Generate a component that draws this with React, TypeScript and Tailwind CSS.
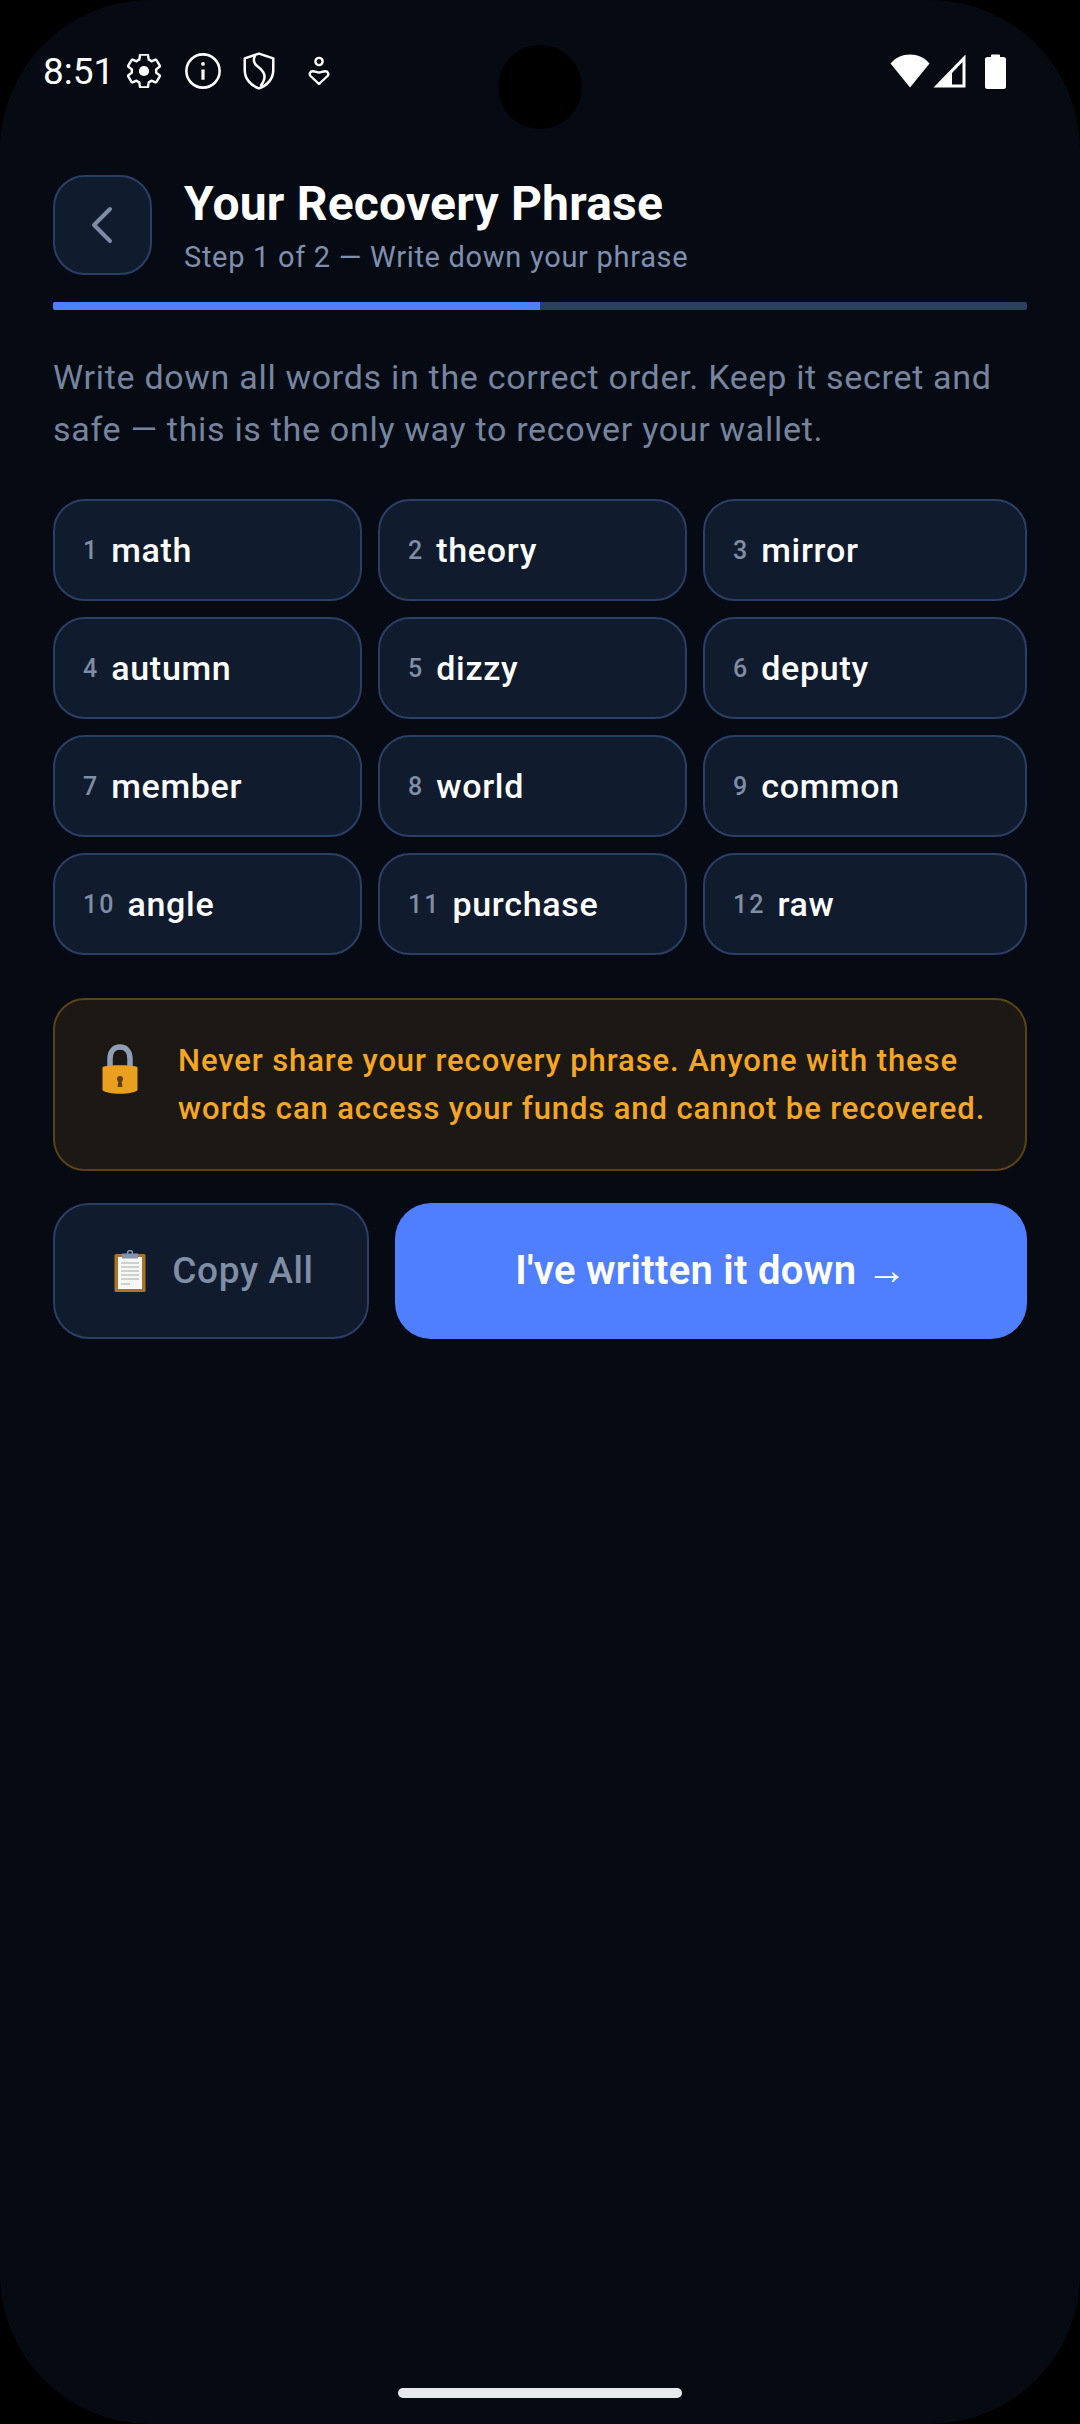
const WORDS = ["math", "theory", "mirror", "autumn", "dizzy", "deputy", "member", "world", "common", "angle", "purchase", "raw"];

function GearIcon() {
  return (
    <svg className="mx-[2px]" width="34" height="34" viewBox="2 2 20 20" fill="none" stroke="white" strokeWidth="1.400" strokeLinejoin="round">
      <path d="M19.140 12.940c.04-.3.06-.61.06-.94 0-.32-.02-.64-.07-.94l2.030-1.580a.49.49 0 0 0 .12-.61l-1.920-3.320a.488.488 0 0 0-.59-.22l-2.390.96c-.5-.38-1.030-.7-1.620-.94l-.36-2.540a.484.484 0 0 0-.48-.41h-3.840c-.24 0-.43.17-.47.41l-.36 2.540c-.59.24-1.130.57-1.620.94l-2.390-.96c-.22-.08-.47 0-.59.22L2.740 8.870c-.12.21-.08.47.12.61l2.030 1.580c-.05.3-.09.63-.09.94s.02.64.07.94l-2.030 1.580a.49.49 0 0 0-.12.61l1.920 3.320c.12.22.37.29.59.22l2.390-.96c.5.38 1.030.7 1.620.94l.36 2.540c.05.24.24.41.48.41h3.840c.24 0 .44-.17.47-.41l.36-2.540c.59-.24 1.130-.56 1.620-.94l2.390.96c.22.08.47 0 .59-.22l1.920-3.320c.12-.22.07-.47-.12-.61l-2.010-1.580z" />
      <circle cx="12" cy="12" r="3" fill="white" stroke="none" />
    </svg>
  );
}

function InfoIcon() {
  return (
    <svg width="38" height="38" viewBox="0 0 24 24" fill="none" stroke="white" strokeWidth="1.600">
      <circle cx="12" cy="12" r="10.500" />
      <path d="M12 11v6.500" strokeWidth="2" />
      <circle cx="12" cy="7.500" r="1.200" fill="white" stroke="none" />
    </svg>
  );
}

function ShieldIcon() {
  return (
    <svg width="32" height="38" viewBox="0 0 20 24" fill="none" stroke="white" strokeWidth="1.600" strokeLinejoin="round">
      <path d="M10 1l9 3v7.500c0 5.300-3.700 9.700-9 11.500-5.300-1.800-9-6.200-9-11.500V4z" />
      <path d="M7.500 2.500c-1.500 2.500-.5 5 1.500 6.500s4.500 3.500 4.500 6.500c0 2-1 4-2.500 6" />
    </svg>
  );
}

function PersonHeartIcon() {
  return (
    <svg width="22" height="30" viewBox="0 0 22 30" fill="none" stroke="white" strokeWidth="2.400" strokeLinejoin="round">
      <circle cx="11" cy="5.500" r="3.600" />
      <path d="M11 28l-8.500-8c-1.600-1.800-.5-4.800 2.200-4.800 2.800 0 4.200 1.300 6.300 1.300s3.500-1.300 6.300-1.300c2.700 0 3.800 3 2.200 4.800z" />
    </svg>
  );
}

function WifiIcon() {
  return (
    <svg width="40" height="34" viewBox="0 0 40 34">
      <path d="M20 33.500L0.500 9.500C5.500 3.500 12.500 0.500 20 0.500s14.500 3 19.500 9z" fill="white" />
    </svg>
  );
}

function SignalIcon() {
  return (
    <svg width="33" height="34" viewBox="0 0 33 34">
      <path fillRule="evenodd" d="M32.500 0.500V33.500H0.500zM29.500 8L19 19v11.500h10.500z" fill="white" />
    </svg>
  );
}

function BatteryIcon() {
  return (
    <svg width="21" height="35" viewBox="0 0 21 35">
      <path d="M7 0.500h7a1 1 0 0 1 1 1V3h3.500A2.500 2.500 0 0 1 21 5.500v27a2.500 2.500 0 0 1-2.500 2.500h-16A2.500 2.500 0 0 1 0 32.500v-27A2.500 2.500 0 0 1 2.500 3H6V1.500a1 1 0 0 1 1-1z" fill="white" />
    </svg>
  );
}

function LockEmoji() {
  return (
    <svg width="36" height="52" viewBox="0 0 36 52">
      <path d="M8 22V15C8 7.500 12 3 18 3s10 4.500 10 12v7" fill="none" stroke="#8f9db5" strokeWidth="5.500" />
      <path d="M0.500 23c4-2.500 31-2.500 35 0v23c-4 5-31 5-35 0z" fill="#eb9f1e" />
      <circle cx="18" cy="35" r="3" fill="#5f3f12" />
      <path d="M16.500 36h3l1 7h-5z" fill="#5f3f12" />
    </svg>
  );
}

function ClipboardEmoji() {
  return (
    <svg width="32" height="42" viewBox="0 0 32 42">
      <rect x="0.500" y="4" width="31" height="38" rx="1.500" fill="#ae7424" />
      <rect x="4" y="7" width="24" height="32" fill="#f7f7f7" />
      <rect x="8" y="3.500" width="16" height="5" fill="#8593ab" />
      <circle cx="16" cy="3" r="2.500" fill="none" stroke="#8593ab" strokeWidth="1.500" />
      <path d="M7 13h18M7 17h18M7 21h18M7 25h18M7 29h18M7 34h9" stroke="#a9a9a9" strokeWidth="1" />
    </svg>
  );
}

export default function App() {
  return (
    <div className="w-[1080px] h-[2424px] bg-black font-['Roboto',sans-serif]">
      <div className="relative flex flex-col h-full rounded-[150px] bg-[#060a13] overflow-hidden">

        {/* camera cutout */}
        <div className="absolute left-[498px] top-[45px] w-[84px] h-[84px] rounded-full bg-black" />

        {/* Status bar */}
        <div className="flex items-center justify-between h-[142px] shrink-0 pl-[43px] pr-[74px]">
          <div className="flex items-center text-white">
            <span className="text-[37px] leading-none w-[82px]">8:51</span>
            <span className="flex items-center gap-[21px]">
              <GearIcon />
              <InfoIcon />
              <ShieldIcon />
            </span>
            <span className="ml-[33px] flex"><PersonHeartIcon /></span>
          </div>
          <div className="flex items-center">
            <WifiIcon />
            <span className="ml-[3px] flex"><SignalIcon /></span>
            <span className="ml-[19px] flex"><BatteryIcon /></span>
          </div>
        </div>

        <main className="flex flex-col px-[53px] pt-[33px]">
          {/* Header */}
          <div className="flex items-center gap-[32px]">
            <button className="flex items-center justify-center w-[99px] h-[100px] rounded-[32px] border-2 border-[#2a3f66] bg-[#111b2e]">
              <svg width="36" height="40" viewBox="0 0 36 40" fill="none" stroke="#7c8ba6" strokeWidth="4" strokeLinecap="round" strokeLinejoin="round">
                <path d="M25 4L9 20l16 16" />
              </svg>
            </button>
            <div className="flex flex-col">
              <h1 className="text-[48px] leading-[56px] font-bold tracking-[0.2px] text-white">Your Recovery Phrase</h1>
              <p className="mt-[7px] text-[29px] leading-[36px] tracking-[0.7px] text-[#7f8fae]">Step 1 of 2 — Write down your phrase</p>
            </div>
          </div>

          {/* Progress */}
          <div className="mt-[27px] h-[8px] rounded-[2px] bg-[#2a3f66] overflow-hidden">
            <div className="w-1/2 h-full bg-[#4f7fff]" />
          </div>

          <p className="mt-[41px] text-[34px] leading-[52px] tracking-[0.7px] text-[#76859f]">
            Write down all words in the correct order. Keep it secret and safe — this is the only way to recover your wallet.
          </p>

          {/* Word grid */}
          <div className="mt-[44px] grid grid-cols-[309px_309px_1fr] gap-x-[16px] gap-y-[16px]">
            {WORDS.map((word, i) => (
              <div key={word} className="flex items-center gap-[12px] h-[102px] pl-[28px] rounded-[32px] border-2 border-[#2a3f66] bg-[#111b2e]">
                <span className="pt-[2px] text-[25px] font-medium tracking-[2px] text-[#7f8da5]">{i + 1}</span>
                <span className="text-[34px] font-medium tracking-[0.7px] text-white">{word}</span>
              </div>
            ))}
          </div>

          {/* Warning */}
          <div className="mt-[43px] flex h-[173px] rounded-[32px] border-2 border-[#5c4218] bg-[#1c1814] pl-[47px] pt-[44px]">
            <LockEmoji />
            <p className="ml-[40px] -mt-[7px] text-[31px] leading-[48px] font-medium tracking-[0.9px] text-[#f5a623] whitespace-nowrap">
              Never share your recovery phrase. Anyone with these<br />words can access your funds and cannot be recovered.
            </p>
          </div>

          {/* Actions */}
          <div className="mt-[32px] flex gap-[26px]">
            <button className="flex items-center justify-center gap-[26px] w-[316px] h-[136px] pl-[6px] rounded-[36px] border-2 border-[#2a3f66] bg-[#111b2e]">
              <ClipboardEmoji />
              <span className="text-[37px] font-medium tracking-[0.6px] text-[#7f8da5]">Copy All</span>
            </button>
            <button className="flex-1 h-[136px] rounded-[36px] bg-[#4f7fff] text-[40px] font-semibold tracking-[0.3px] text-white">
              I've written it down <span className="font-normal">→</span>
            </button>
          </div>
        </main>

        <div className="mt-auto mb-[26px] mx-auto w-[284px] h-[10px] rounded-full bg-[#e8e9ec]" />
      </div>
    </div>
  );
}
